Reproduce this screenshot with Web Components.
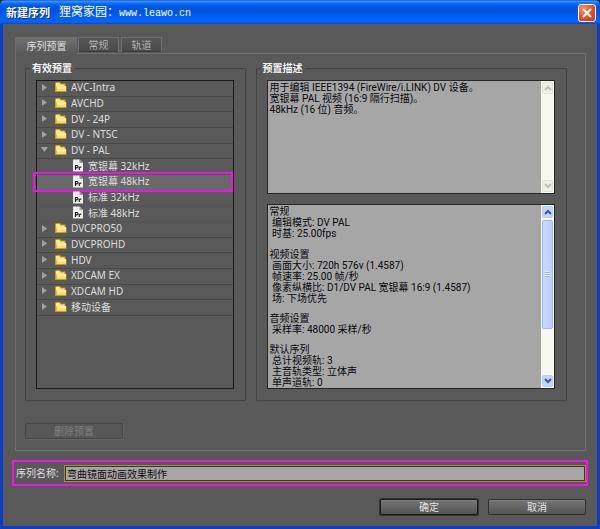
<!DOCTYPE html>
<html lang="zh-CN">
<head>
<meta charset="utf-8">
<title>新建序列</title>
<style>
  html, body { margin: 0; background: #26262a; }
  body { font: 10px/12px "Noto Sans", "Noto Sans CJK SC", sans-serif; color: #dcdcdc; }
</style>
</head>
<body>
<sequence-dialog></sequence-dialog>
<script>
const define = (name, html, setup) => {
  const template = document.createElement('template');
  template.innerHTML = '<style>*{box-sizing:border-box}button{font:inherit;color:inherit;margin:0;padding:0}:host{box-sizing:border-box}</style>' + html;
  customElements.define(name, class extends HTMLElement {
    connectedCallback() {
      if (this.shadowRoot) return;
      this.attachShadow({ mode: 'open' }).append(template.content.cloneNode(true));
      if (setup) setup(this, this.shadowRoot);
    }
  });
};

define('title-bar', `
  <style>
    :host { display: flex; align-items: center; height: 24px; padding: 2px 4px 0 6px; color: #fff;
      border-radius: 5px 5px 0 0;
      background: linear-gradient(#0a3fc0 0, #3f9bff 1px, #1272f5 3px, #0058e6 6px, #0055e0 12px, #0062fa 19px, #0066ff 22px, #0648c8 24px); }
    h1 { margin: 0 9px 0 0; font-size: 11px; line-height: 14px; font-weight: 700; text-shadow: 1px 1px #123070; }
    .credit { font: 12px/14px "Liberation Mono", "Noto Sans CJK SC", monospace; flex: 1; white-space: nowrap; }
    .credit span { font-size: 10px; }
    button { width: 18px; height: 18px; border: 1px solid #fff; border-radius: 3px; display: grid; place-items: center;
      background: radial-gradient(circle at 30% 25%, #f0906c, #e04a20 60%, #c43a14); }
  </style>
  <h1>新建序列</h1><div class="credit">狸窝家园：<span>www.leawo.cn</span></div>
  <button type="button" aria-label="关闭"><svg width="12" height="12" viewBox="0 0 12 12"><path d="M2 2l8 8M10 2l-8 8" stroke="#fff" stroke-width="2"/></svg></button>`);

define('tab-strip', `
  <style>
    :host { display: flex; height: 16px; gap: 2px; }
    button { border: 1px solid #6e6e6e; border-bottom: 0; border-right-color: #707070; background: linear-gradient(#575757, #484848); color: #b4b4b4; width: 41px; height: 15px; line-height: 14px; box-shadow: inset 0 -1px #3c3c3c; }
    button[aria-selected=true] { width: 62px; height: 17px; margin-right: -1px; background: linear-gradient(#707070, #595959); color: #dedede; box-shadow: none; border-right: 0; position: relative; }
  </style>
  <button type="button" role="tab" aria-selected="true">序列预置</button>
  <button type="button" role="tab" aria-selected="false">常规</button>
  <button type="button" role="tab" aria-selected="false">轨道</button>`,
  (host) => host.setAttribute('role', 'tablist'));

define('group-box', `
  <style>
    :host { display: flex; min-width: 0; }
    fieldset { flex: 1; min-width: 0; margin: 0; padding: 5px 11px 11px 10px; border: 1px solid #434343; display: flex; flex-direction: column; border-radius: 1px; }
    legend { padding: 0 3px 0 2px; margin-left: -6px; font-weight: 700; color: #f4f4f4; line-height: 14px; }
    .content { flex: 1; height: 100%; display: grid; min-width: 0; }
  </style>
  <fieldset><legend></legend><div class="content"><slot></slot></div></fieldset>`,
  (host, root) => { root.querySelector('legend').textContent = host.getAttribute('label'); });

define('preset-row', `
  <style>
    :host { display: flex; align-items: center; border-bottom: 1px solid #494949; padding: 0 0 2px 4px; position: relative; min-height: 0; }
    svg { display: block; flex: none; }
    .arrow { width: 7px; height: 7px; margin-right: 6px; fill: #a2a2a2; }
    :host([open]) .arrow { transform: rotate(90deg); }
    .file { display: none; margin-left: 19px; margin-right: 5px; }
    .folder { margin-right: 4px; }
    :host([leaf]) .arrow { visibility: hidden; }
    :host([leaf]) .folder { display: none; }
    :host([leaf]) .file { display: block; }
    :host([leaf]) { border-bottom-color: #555; }
    :host([selected]) { background: #696969; }
    :host([selected])::after { content: ""; position: absolute; inset: -3px 0 -2px -4px; border: 2px solid #f012e6; }
    span { white-space: nowrap; }
  </style>
  <svg class="arrow" viewBox="0 0 7 7"><path d="M1 0L6 3.5L1 7z"/></svg>
  <svg class="folder" width="13" height="12" viewBox="0 0 13 12">
    <path d="M1 2L2 1h4l1 1.5h4.5V5H12.5V11H1z" fill="#c99a22"/>
    <path d="M2 2h3.5l1 1.5H10.5V5H3L2 7z" fill="#fbe78c"/>
    <path d="M2.5 10V6L3.5 5H12V10z" fill="#f8dc6c"/><path d="M3.5 5.5H12v2H3z" fill="#fff6b4"/>
  </svg>
  <svg class="file" width="10" height="13" viewBox="0 0 10 13">
    <path d="M0 0.5H6.5L10 4V12.5H0z" fill="#eee"/><path d="M6.5 0.5V4H10z" fill="#999"/>
    <path d="M2.5 11V6.5H4Q5 6.5 5 7.6T4 8.8H2.5M6.3 11V8M6.3 9Q7 7.8 8.3 8.2" fill="none" stroke="#25252c" stroke-width="1.2"/>
  </svg>
  <span><slot></slot></span>`,
  (host) => host.setAttribute('role', 'treeitem'));

define('preset-tree', `
  <style>
    :host { display: block; border: 1px solid #191919; min-height: 240px; }
    .rows { display: grid; grid-auto-rows: 1fr; height: 235px; }
  </style>
  <div class="rows" role="tree" aria-label="有效预置"></div>`,
  (host, root) => {
    const rows = [['AVC-Intra'], ['AVCHD'], ['DV - 24P'], ['DV - NTSC'], ['DV - PAL', 'open'],
      ['宽银幕 32kHz', 'leaf'], ['宽银幕 48kHz', 'leaf', 'selected'], ['标准 32kHz', 'leaf'], ['标准 48kHz', 'leaf'],
      ['DVCPRO50'], ['DVCPROHD'], ['HDV'], ['XDCAM EX'], ['XDCAM HD'], ['移动设备']];
    for (const [label, ...flags] of rows) {
      const row = document.createElement('preset-row');
      row.textContent = label;
      flags.forEach(flag => row.setAttribute(flag, ''));
      root.querySelector('.rows').append(row);
    }
  });

define('scroll-strip', `
  <style>
    :host { display: flex; flex-direction: column; width: 13px; flex: none; background: #f8f8f3; padding: 1px; }
    button { height: 12px; border: 1px solid #e2e2da; border-radius: 2px; background: #f0f0ea; display: grid; place-items: center; flex: none; }
    svg { fill: none; stroke: #c0c0b8; stroke-width: 2; }
    .track { flex: 1; display: flex; flex-direction: column; padding-top: 2px; }
    .thumb { display: none; height: 70%; border: 1px solid #a4b8ec; border-radius: 2px; background: linear-gradient(90deg, #cbdafe, #bccdfb); place-items: center; }
    :host([active]) button { border-color: #b8caf6; background: #c4d4fd; }
    :host([active]) svg { stroke: #40598c; }
    :host([active]) .thumb { display: grid; }
    i { width: 5px; height: 6px; background: repeating-linear-gradient(#eef4fe 0 1px, #9db5e8 1px 2px); }
  </style>
  <button type="button" aria-label="向上滚动"><svg width="8" height="6" viewBox="0 0 8 6"><path d="M1 5l3-3 3 3"/></svg></button>
  <div class="track"><div class="thumb"><i></i></div></div>
  <button type="button" aria-label="向下滚动"><svg width="8" height="6" viewBox="0 0 8 6"><path d="M1 1l3 3 3-3"/></svg></button>`);

define('text-pane', `
  <style>
    :host { display: flex; border: 1px solid #252525; background: #a6a6a6; color: #08080c; min-height: 0; }
    .text { flex: 1; padding: 1px 0 0 2px; display: flex; flex-direction: column; justify-content: space-between; font-family: Roboto, "Noto Sans CJK SC", sans-serif; line-height: 11px; white-space: pre; min-width: 0; }
    p { margin: 0; }
  </style>
  <div class="text"></div><scroll-strip></scroll-strip>`,
  (host, root) => {
    for (const text of host.textContent.split('||')) {
      const section = document.createElement('section');
      for (const line of text.split('|')) {
        const paragraph = document.createElement('p');
        paragraph.textContent = line;
        section.append(paragraph);
      }
      root.querySelector('.text').append(section);
    }
    if (host.hasAttribute('scrollable')) root.querySelector('scroll-strip').setAttribute('active', '');
  });

define('push-button', `
  <style>
    :host { display: block; width: 98px; height: 16px; }
    button { display: block; width: 100%; height: 100%; line-height: 13px; border: 1px solid #303030; border-radius: 2px; background: linear-gradient(#747474, #545454); color: #e4e4e4; box-shadow: inset 0 1px #808080; }
    :host([primary]) button { border-color: #191919; box-shadow: 0 0 0 1px #333, inset 0 1px #808080; }
    button:disabled { background: #575757; color: #808080; border-color: #464646; box-shadow: 1px 1px #656565; }
  </style>
  <button type="button"><slot></slot></button>`,
  (host, root) => { root.querySelector('button').disabled = host.hasAttribute('disabled'); });

define('name-field', `
  <style>
    :host { display: flex; align-items: center; height: 26px; border: 2px solid #f012e6; padding-left: 2px; }
    label { width: 48px; white-space: nowrap; color: #ddd; }
    input { flex: 1; min-width: 0; height: 17px; margin: 0; padding: 0 2px; border: 1px solid #b08a2c; outline: 1px solid #3c3438; outline-offset: -2px; border-radius: 0; background: #a6a6a6; color: #0c0c0c; font: inherit; }
  </style>
  <label for="name">序列名称:</label><input id="name" type="text" value="弯曲镜面动画效果制作">`);

define('sequence-dialog', `
  <style>
    :host { display: flex; flex-direction: column; min-height: 100vh; }
    .body { flex: 1; display: flex; flex-direction: column; padding: 13px 9px 11px 9px; background: #595959; border: solid #0a3fc4; border-width: 0 3px 3px; }
    tab-strip { margin-left: 3px; }
    .panel { flex: 1; display: flex; flex-direction: column; margin: 0 2px 0 3px; border: 1px solid #707070; padding: 7px 18px 11px 9px; }
    .groups { flex: 1; display: grid; grid-template-columns: 221fr 312fr; gap: 10px; margin-bottom: 22px; }
    .panes { display: grid; grid-template-rows: 114fr 184fr; gap: 10px; }
    name-field { margin: 9px 0 13px 0; }
    .actions { display: flex; justify-content: flex-end; gap: 10px; padding-right: 2px; }
  </style>
  <title-bar></title-bar>
  <div class="body">
    <tab-strip></tab-strip>
    <div class="panel">
      <div class="groups">
        <group-box label="有效预置"><preset-tree></preset-tree></group-box>
        <group-box label="预置描述"><div class="panes">
          <text-pane>用于编辑 IEEE1394 (FireWire/i.LINK) DV 设备。|宽银幕 PAL 视频 (16:9 隔行扫描)。|48kHz (16 位) 音频。</text-pane>
          <text-pane scrollable>常规| 编辑模式: DV PAL| 时基: 25.00fps||视频设置| 画面大小: 720h 576v (1.4587)| 帧速率: 25.00 帧/秒| 像素纵横比: D1/DV PAL 宽银幕 16:9 (1.4587)| 场: 下场优先||音频设置| 采样率: 48000 采样/秒||默认序列| 总计视频轨: 3| 主音轨类型: 立体声| 单声道轨: 0</text-pane>
        </div></group-box>
      </div>
      <push-button disabled>删除预置</push-button>
    </div>
    <name-field></name-field>
    <div class="actions"><push-button primary>确定</push-button><push-button>取消</push-button></div>
  </div>`);
</script>
</body>
</html>
